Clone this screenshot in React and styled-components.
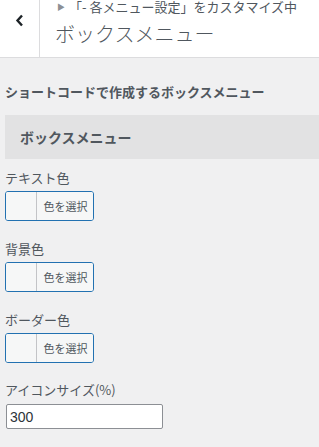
import React from "react";
import styled, { createGlobalStyle } from "styled-components";

const GlobalStyle = createGlobalStyle`
  html, body {
    margin: 0;
    padding: 0;
    background: #f0f0f1;
  }
  body {
    font-family: "Noto Sans CJK JP", "Noto Sans", "Liberation Sans", sans-serif;
    color: #50575e;
  }
`;

const Page = styled.div`
  width: 319px;
  height: 447px;
  overflow: hidden;
  background: #f0f0f1;
`;

const Header = styled.div`
  display: flex;
  height: 57px;
  background: #fff;
  border-bottom: 1px solid #dcdcde;
`;

const BackButton = styled.div`
  width: 40px;
  flex-shrink: 0;
  border-right: 1px solid #dcdcde;
  display: flex;
  justify-content: center;
  padding-top: 14px;
  box-sizing: border-box;
  svg {
    display: block;
  }
`;

const TitleBlock = styled.div`
  padding-left: 15px;
  display: flex;
  flex-direction: column;
`;

const Crumb = styled.div`
  font-size: 13px;
  line-height: 14px;
  color: #50575e;
  white-space: nowrap;
  margin-left: 2px;
  span {
    font-size: 8px;
    margin-right: 4px;
    color: #8c8f94;
    vertical-align: 2px;
  }
`;

const Title = styled.div`
  font-size: 20px;
  line-height: 24px;
  color: #50575e;
  font-weight: 300;
  margin-top: 8px;
  white-space: nowrap;
`;

const Body = styled.div`
  padding: 0 0 0 5px;
`;

const Description = styled.div`
  font-size: 13px;
  font-weight: 600;
  line-height: 20px;
  color: #50575e;
  margin-top: 24px;
`;

const SectionHead = styled.div`
  margin-top: 13px;
  height: 44px;
  background: #e2e2e3;
  display: flex;
  align-items: center;
  padding-left: 15px;
  font-size: 14px;
  font-weight: 700;
  color: #50575e;
`;

const Field = styled.div`
  margin-top: ${(p) => p.$top}px;
`;

const Label = styled.div`
  font-size: 13px;
  line-height: 20px;
  color: #50575e;
  white-space: nowrap;
`;

const ColorButton = styled.div`
  margin-top: 3px;
  width: 89px;
  height: 30px;
  box-sizing: border-box;
  border: 1px solid #2271b1;
  border-radius: 3px;
  background: #f6f7f7;
  display: flex;
  overflow: hidden;
`;

const Swatch = styled.div`
  width: 30px;
  border-right: 1px solid #c3c4c7;
  background: #f6f7f7;
`;

const ButtonText = styled.div`
  flex: 1;
  display: flex;
  align-items: center;
  justify-content: center;
  font-size: 11px;
  color: #50575e;
  background: #f6f7f7;
  padding-left: 1px;
`;

const NumberInput = styled.div`
  margin-top: 4px;
  margin-left: 1px;
  width: 157px;
  height: 25px;
  box-sizing: border-box;
  border: 1px solid #8c8f94;
  border-radius: 2px;
  background: #fff;
  display: flex;
  align-items: center;
  padding-left: 3px;
  font-family: "Liberation Sans", "Noto Sans", sans-serif;
  font-size: 14px;
  color: #2c3338;
`;

function ColorField({ label, top }) {
  return (
    <Field $top={top}>
      <Label>{label}</Label>
      <ColorButton>
        <Swatch />
        <ButtonText>色を選択</ButtonText>
      </ColorButton>
    </Field>
  );
}

export default function App() {
  return (
    <>
      <GlobalStyle />
      <Page>
        <Header>
          <BackButton>
            <svg width="9" height="13" viewBox="0 0 9 13">
              <path
                d="M7 1.5 L2.5 6.5 L7 11.5"
                fill="none"
                stroke="#1d2327"
                strokeWidth="2.4"
              />
            </svg>
          </BackButton>
          <TitleBlock>
            <Crumb>
              <span>▶</span>「- 各メニュー設定」をカスタマイズ中
            </Crumb>
            <Title>ボックスメニュー</Title>
          </TitleBlock>
        </Header>
        <Body>
          <Description>ショートコードで作成するボックスメニュー</Description>
          <SectionHead>ボックスメニュー</SectionHead>
          <ColorField label="テキスト色" top={9} />
          <ColorField label="背景色" top={18} />
          <ColorField label="ボーダー色" top={18} />
          <Field $top={17}>
            <Label>アイコンサイズ(%)</Label>
            <NumberInput>300</NumberInput>
          </Field>
        </Body>
      </Page>
    </>
  );
}
